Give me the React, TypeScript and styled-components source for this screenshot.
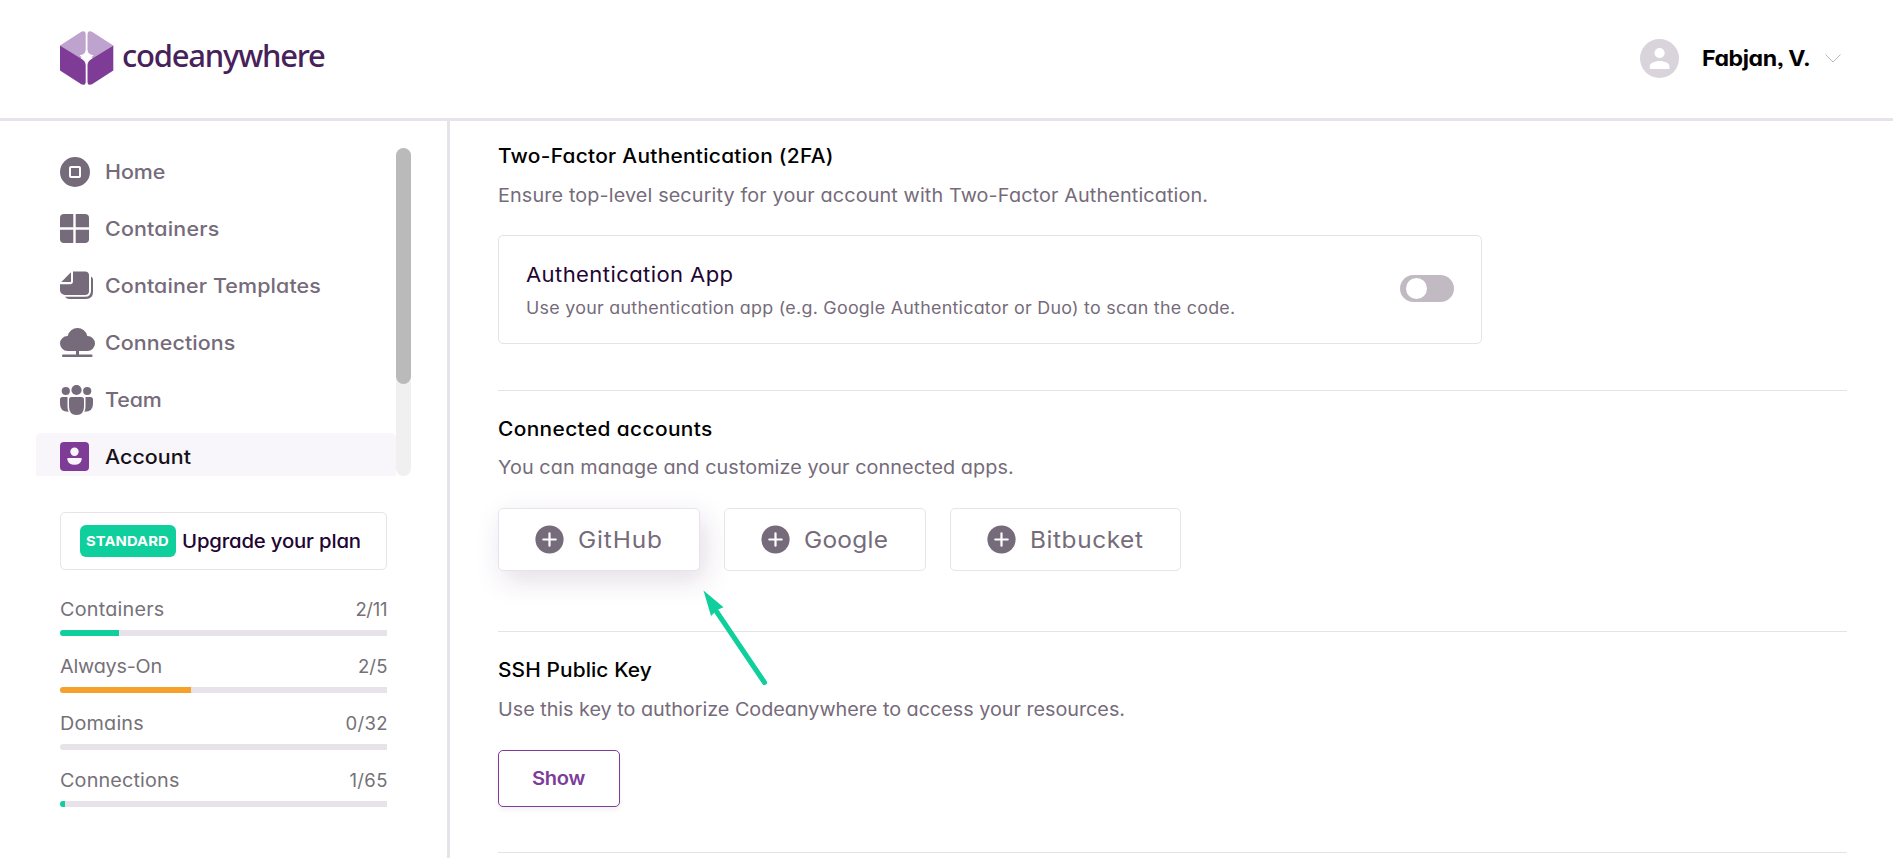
import React from 'react';
import styled, { createGlobalStyle, css } from 'styled-components';

const Global = createGlobalStyle`
  *, *::before, *::after { box-sizing: border-box; }
  body {
    margin: 0;
    background: #fff;
    color: #000;
    font-family: Inter, "Open Sans", sans-serif;
    font-feature-settings: "cv11", "ss03";
    overflow: hidden;
  }
  h2, p, ul { margin: 0; padding: 0; list-style: none; }
  button { font: inherit; font-feature-settings: inherit; cursor: pointer; }
  svg { display: block; flex: none; }
`;

/* Widens the letterforms a little, with a per-text tracking value. */
const wide = css<{ $track?: number }>`
  width: fit-content;
  letter-spacing: ${(p) => p.$track ?? 0}px;
  white-space: nowrap;
  transform: scaleX(1.07);
  transform-origin: left center;
`;

const Page = styled.div`
  display: flex;
  flex-direction: column;
  height: 858px;
  overflow: hidden;
`;

const Header = styled.header`
  display: flex;
  flex: none;
  align-items: center;
  justify-content: space-between;
  height: 121px;
  padding: 0 52px 2px 60px;
  border-bottom: 3px solid #e8e3ea;
`;

const Brand = styled.div`
  display: flex;
  align-items: center;
  gap: 8px;
`;

const BrandName = styled.span`
  padding-bottom: 6px;
  color: #46215a;
  font-family: "Noto Sans", sans-serif;
  font-size: 31px;
  font-weight: 500;
  line-height: 40px;
  letter-spacing: -1.22px;
`;

const UserMenu = styled.div`
  display: flex;
  align-items: center;
`;

const UserName = styled.span`
  ${wide}
  width: 108px;
  margin: 0 15px 0 23px;
  font-size: 21.6px;
  font-weight: 700;
`;

const Body = styled.div`
  display: flex;
  flex: 1;
  min-height: 0;
`;

const Sidebar = styled.aside`
  flex: none;
  width: 450px;
  padding: 27px 36px 0;
  border-right: 3px solid #e8e3ea;
`;

const NavScroller = styled.nav`
  display: flex;
  width: 375px;
  height: 328px;
  overflow: hidden;
`;

const NavList = styled.ul`
  display: flex;
  flex: 1;
  flex-direction: column;
  gap: 9px;
`;

const NavItem = styled.li<{ $active?: boolean }>`
  display: flex;
  flex: none;
  align-items: center;
  height: 48px;
  padding-left: 24px;
  border-radius: 5px;
  background: ${(p) => (p.$active ? '#f8f6fa' : 'transparent')};
  color: ${(p) => (p.$active ? '#161118' : '#756b7a')};
`;

const NavIcon = styled.span`
  flex: none;
  width: 45px;
  color: #756b7a;
`;

const NavLabel = styled.span`
  ${wide}
  padding-bottom: 1px;
  font-size: 20px;
  font-weight: 500;
`;

const ScrollTrack = styled.div`
  flex: none;
  width: 15px;
  border-radius: 8px;
  background: #f0f0f0;
`;

const ScrollThumb = styled.div`
  height: 236px;
  border-radius: 8px;
  background: #bababa;
`;

const PlanCard = styled.div`
  display: flex;
  align-items: center;
  width: 327px;
  height: 58px;
  margin: 36px 0 27px 24px;
  padding: 0 19px;
  border: 1px solid #e8e3ea;
  border-radius: 5px;
`;

const PlanBadge = styled.span`
  display: flex;
  flex: none;
  align-items: center;
  width: 96px;
  height: 32px;
  margin-right: 6px;
  padding-left: 6px;
  border-radius: 6px;
  background: #0fcf9c;
  color: #fff;
  font-size: 13.8px;
  font-weight: 700;
`;

const PlanText = styled.span`
  ${wide}
  color: #1e0532;
  font-size: 19px;
  font-weight: 500;
`;

const Meters = styled.div`
  display: flex;
  flex-direction: column;
  gap: 18px;
  width: 327px;
  margin-left: 24px;
`;

const Meter = styled.div`
  display: flex;
  flex-direction: column;
  gap: 9px;
`;

const MeterHead = styled.div`
  display: flex;
  justify-content: space-between;
  color: #757178;
  font-size: 18.5px;
  line-height: 24px;
`;

const WideText = styled.span`
  ${wide}
`;

const MeterValue = styled.span<{ $track: number }>`
  margin-right: ${(p) => -p.$track - 0.5}px;
  letter-spacing: ${(p) => p.$track}px;
`;

const MeterBar = styled.div`
  height: 6px;
  border-radius: 3px 0 0 3px;
  background: #e8e3ea;
  overflow: hidden;
`;

const MeterFill = styled.div<{ $tone: string }>`
  height: 100%;
  background: ${(p) => p.$tone};
`;

const Main = styled.main`
  flex: 1;
  padding: 0 46px 0 48px;
  min-width: 0;
`;

const Section = styled.section<{ $top: number; $bottom: number }>`
  padding: ${(p) => p.$top}px 0 ${(p) => p.$bottom}px;
  border-bottom: 1px solid #e5e3e7;
`;

const SectionTitle = styled.h2<{ $gap?: number }>`
  ${wide}
  margin-bottom: ${(p) => p.$gap ?? 9}px;
  font-size: 19.5px;
  font-weight: 500;
  line-height: 30px;
`;

const SectionText = styled.p<{ $gap?: number }>`
  ${wide}
  margin-bottom: ${(p) => p.$gap ?? 26}px;
  color: #756b7a;
  font-size: 18.5px;
  line-height: 30px;
`;

const OptionCard = styled.div`
  display: flex;
  align-items: center;
  justify-content: space-between;
  width: 984px;
  height: 109px;
  padding: 0 27px;
  border: 1px solid #e5e3e7;
  border-radius: 5px;
`;

const OptionCopy = styled.div`
  padding-top: 2px;
`;

const OptionTitle = styled.div`
  ${wide}
  margin-bottom: 5px;
  color: #1e0532;
  font-size: 20.6px;
  line-height: 30px;
`;

const OptionText = styled.div`
  ${wide}
  color: #756b7a;
  font-size: 16.7px;
  line-height: 27px;
`;

const Toggle = styled.span`
  display: flex;
  width: 54px;
  height: 27px;
  margin-bottom: 2px;
  padding: 3px 6px;
  border-radius: 14px;
  background: #c1bac3;
`;

const ToggleKnob = styled.span`
  width: 21px;
  height: 21px;
  border-radius: 50%;
  background: #fff;
`;

const AccountRow = styled.div`
  display: flex;
  gap: 24px;
`;

const AccountButton = styled.button<{ $width: number; $raised?: boolean }>`
  display: flex;
  align-items: center;
  gap: 14px;
  width: ${(p) => p.$width}px;
  height: 63px;
  padding: 0 0 0 36px;
  border: 1px solid #e8e3ea;
  border-radius: 5px;
  background: #fff;
  color: #756b7a;
  font-size: 22.8px;
  white-space: nowrap;
  box-shadow: ${(p) => (p.$raised ? '5px 9px 28px rgba(70, 25, 90, 0.15)' : 'none')};
`;

const ShowButton = styled.button`
  display: flex;
  align-items: center;
  width: 122px;
  height: 57px;
  padding: 0 0 0 33px;
  border: 1px solid #7d3c98;
  border-radius: 5px;
  background: #fff;
  color: #7d3c98;
  font-size: 18.8px;
  font-weight: 600;
  box-shadow: 0 3px 5px rgba(0, 0, 0, 0.06);
`;

const Pointer = styled.svg`
  position: absolute;
  left: 700px;
  top: 588px;
`;

const Logo = () => (
  <svg width="54" height="54" viewBox="0 0 54 54">
    <path fill="#bda3ce" d="M0 14.4 21.3.7Q25.7-1 25.7 3.6V18.5Q25.2 24 20.2 27.4Z" />
    <path fill="#bda3ce" d="M53.3 14.4 32 .7Q27.5-1 27.5 3.6V18.5Q28 24 33 27.4Z" />
    <path fill="#7f3c97" d="M0 14.4 20.5 27.2Q25.7 30 25.7 34V50.4Q25.7 55 21.3 53.3L0 39.5Z" />
    <path fill="#7f3c97" d="M53.3 14.4 32.7 27.2Q27.5 30 27.5 34V50.4Q27.5 55 32 53.3L53.3 39.5Z" />
    <path fill="#fff" d="M26.6 17.5Q27 23.5 33.6 24.2L26.6 31 19.6 24.2Q26.2 23.5 26.6 17.5Z" />
  </svg>
);

const Avatar = () => (
  <svg width="39" height="39" viewBox="0 0 39 39">
    <circle cx="19.5" cy="19.5" r="19.5" fill="#d9d4dc" />
    <circle cx="19.6" cy="14" r="5.1" fill="#fff" />
    <path fill="#fff" d="M9.8 30V27c0-3.600 6.500-5 9.800-5s9.800 1.400 9.800 5v3Z" />
  </svg>
);

const HomeIcon = () => (
  <svg width="30" height="30" viewBox="0 0 30 30">
    <circle cx="15" cy="15" r="15" fill="currentColor" />
    <rect x="10" y="10" width="10" height="10" rx="1" fill="none" stroke="#fff" strokeWidth="2" />
  </svg>
);

const ContainersIcon = () => (
  <svg width="29" height="30" viewBox="0 0 29 30" fill="currentColor">
    <path d="M4 0h9.300v13.300H0V4a4 4 0 0 1 4-4Z" />
    <path d="M15.700 0H25a4 4 0 0 1 4 4v9.300H15.700Z" />
    <path d="M0 15.700h13.300V29H4a4 4 0 0 1-4-4Z" />
    <path d="M15.700 15.700H29V25a4 4 0 0 1-4 4h-9.300Z" />
  </svg>
);

const TemplatesIcon = () => (
  <svg width="33" height="30" viewBox="0 0 33 30" fill="currentColor">
    <path d="M11 1.300V11H1.300Z" />
    <path d="M13 .5H25a4 4 0 0 1 4 4V20a4 4 0 0 1-4 4H5a5 5 0 0 1-5-5V13.200H10a3 3 0 0 0 3-3Z" />
    <path d="M31 5.500q2 1 2 3V21q0 7-7 7H9.500q-3 0-4.500-2.200H25q6 0 6-6Z" />
  </svg>
);

const ConnectionsIcon = () => (
  <svg width="35" height="32" viewBox="0 0 35 32" fill="currentColor">
    <path d="M7.500 24a7.500 7.500 0 0 1 0-15h.2a10 10 0 0 1 19.600 0h.2a7.500 7.500 0 0 1 0 15Z" />
    <path d="M16 23h3v5h-3Z" />
    <rect x="2" y="27.600" width="30.500" height="2.300" rx="1" />
  </svg>
);

const TeamIcon = () => (
  <svg width="33" height="30" viewBox="0 0 33 30" fill="currentColor">
    <circle cx="5.800" cy="6" r="4.100" />
    <circle cx="27.200" cy="6" r="4.100" />
    <circle cx="16.500" cy="5" r="5.100" />
    <path d="M2.500 12H7.500V22q0 2.800 1.200 4.800Q0 27 0 19V14.500Q0 12 2.500 12Z" />
    <path d="M30.500 12H25.500V22q0 2.800-1.200 4.800Q33 27 33 19V14.500Q33 12 30.500 12Z" />
    <path d="M11.500 12h10q2.500 0 2.500 2.500V21.500q0 8.500-7.500 8.500T9 21.500V14.500Q9 12 11.500 12Z" />
  </svg>
);

const AccountIcon = () => (
  <svg width="29" height="30" viewBox="0 0 29 30">
    <rect width="29" height="29" rx="4" fill="#7f3c97" />
    <circle cx="14.500" cy="9.800" r="4.200" fill="#f8f6fa" />
    <path fill="#f8f6fa" d="M8.200 16H20.800Q22 16 21.700 17.400 20.500 22.700 14.500 22.700 8.500 22.700 7.300 17.400 7 16 8.200 16Z" />
  </svg>
);

const PlusIcon = () => (
  <svg width="29" height="29" viewBox="0 0 29 29">
    <circle cx="14.500" cy="14.500" r="14.100" fill="#756b7a" />
    <path d="M14.500 8.300v12.400M8.300 14.500h12.400" stroke="#fff" strokeWidth="2.200" strokeLinecap="round" />
  </svg>
);

const navItems = [
  { label: 'Home', icon: <HomeIcon />, track: 0 },
  { label: 'Containers', icon: <ContainersIcon />, track: 0.18 },
  { label: 'Container Templates', icon: <TemplatesIcon />, track: 0.12 },
  { label: 'Connections', icon: <ConnectionsIcon />, track: 0.1 },
  { label: 'Team', icon: <TeamIcon />, track: -0.1 },
  { label: 'Account', icon: <AccountIcon />, active: true, track: 0.05 },
];

const meters = [
  { label: 'Containers', used: 2, total: 11, tone: '#0fcf9c', track: 0.2, valueTrack: -0.3 },
  { label: 'Always-On', used: 2, total: 5, tone: '#f6a12c', track: -0.2, valueTrack: 0.2 },
  { label: 'Domains', used: 0, total: 32, tone: '#0fcf9c', track: 0.18, valueTrack: 0.3 },
  { label: 'Connections', used: 1, total: 65, tone: '#0fcf9c', track: 0.14, valueTrack: 0.4 },
];

const accounts = [
  { label: 'GitHub', width: 202, raised: true, track: 0.8 },
  { label: 'Google', width: 202, track: 0.25 },
  { label: 'Bitbucket', width: 231, track: 0.55 },
];

export default function App() {
  return (
    <Page>
      <Global />
      <Header>
        <Brand>
          <Logo />
          <BrandName>codeanywhere</BrandName>
        </Brand>
        <UserMenu>
          <Avatar />
          <UserName $track={-0.4}>Fabjan, V.</UserName>
          <svg width="16" height="9" viewBox="0 0 16 9">
            <path d="M.5.500 8 8 15.500.500" fill="none" stroke="#b9b9b9" />
          </svg>
        </UserMenu>
      </Header>
      <Body>
        <Sidebar>
          <NavScroller>
            <NavList>
              {navItems.map((item) => (
                <NavItem key={item.label} $active={item.active}>
                  <NavIcon>{item.icon}</NavIcon>
                  <NavLabel $track={item.track}>{item.label}</NavLabel>
                </NavItem>
              ))}
            </NavList>
            <ScrollTrack>
              <ScrollThumb />
            </ScrollTrack>
          </NavScroller>
          <PlanCard>
            <PlanBadge>
              <WideText $track={0.1}>STANDARD</WideText>
            </PlanBadge>
            <PlanText $track={-0.16}>Upgrade your plan</PlanText>
          </PlanCard>
          <Meters>
            {meters.map((m) => (
              <Meter key={m.label}>
                <MeterHead>
                  <WideText $track={m.track}>{m.label}</WideText>
                  <MeterValue $track={m.valueTrack}>{`${m.used}/${m.total}`}</MeterValue>
                </MeterHead>
                <MeterBar>
                  <MeterFill $tone={m.tone} style={{ width: `${(m.used / m.total) * 100}%` }} />
                </MeterBar>
              </Meter>
            ))}
          </Meters>
        </Sidebar>
        <Main>
          <Section $top={20} $bottom={46}>
            <SectionTitle $track={0.27}>Two-Factor Authentication (2FA)</SectionTitle>
            <SectionText $track={0.12} $gap={25}>
              Ensure top-level security for your account with Two-Factor Authentication.
            </SectionText>
            <OptionCard>
              <OptionCopy>
                <OptionTitle $track={0.38}>Authentication App</OptionTitle>
                <OptionText $track={0.25}>
                  Use your authentication app (e.g. Google Authenticator or Duo) to scan the code.
                </OptionText>
              </OptionCopy>
              <Toggle>
                <ToggleKnob />
              </Toggle>
            </OptionCard>
          </Section>
          <Section $top={23} $bottom={60}>
            <SectionTitle $track={0.36} $gap={8}>
              Connected accounts
            </SectionTitle>
            <SectionText $track={0.07}>You can manage and customize your connected apps.</SectionText>
            <AccountRow>
              {accounts.map((a) => (
                <AccountButton key={a.label} $width={a.width} $raised={a.raised}>
                  <PlusIcon />
                  <WideText $track={a.track}>{a.label}</WideText>
                </AccountButton>
              ))}
            </AccountRow>
          </Section>
          <Section $top={23} $bottom={45}>
            <SectionTitle $track={0.1}>SSH Public Key</SectionTitle>
            <SectionText $track={-0.02}>
              Use this key to authorize Codeanywhere to access your resources.
            </SectionText>
            <ShowButton>
              <WideText $track={-0.25}>Show</WideText>
            </ShowButton>
          </Section>
        </Main>
      </Body>
      <Pointer width="70" height="100" viewBox="0 0 70 100">
        <path d="M16.500 23.500 64.500 94.500" stroke="#0fcf9c" strokeWidth="5" strokeLinecap="round" />
        <path d="M3.500 2.500 23.500 19.300 17 22 11 28Z" fill="#0fcf9c" />
      </Pointer>
    </Page>
  );
}
